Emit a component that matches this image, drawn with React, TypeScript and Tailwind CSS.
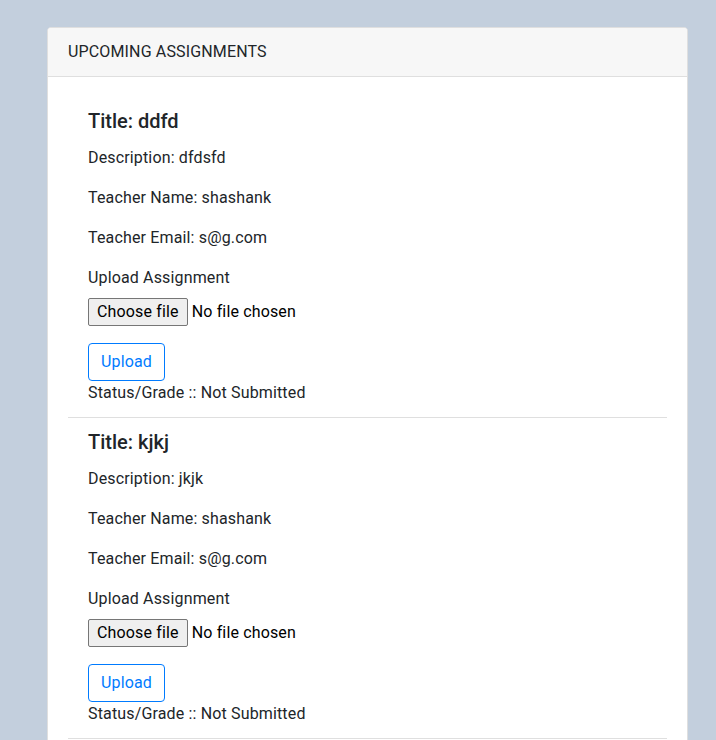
const assignments = [
  { title: "ddfd", description: "dfdsfd", teacher: "shashank", email: "s@g.com", status: "Not Submitted" },
  { title: "kjkj", description: "jkjk", teacher: "shashank", email: "s@g.com", status: "Not Submitted" },
];

function FileField() {
  return (
    <div className="flex items-center h-[28px] mb-[17px] mt-[1px]">
      <span className="h-[28px] px-[8px] flex items-center bg-[#efefef] border border-[#767676] rounded-[2px] text-black">
        Choose file
      </span>
      <span className="ml-[4px] text-black">No file chosen</span>
    </div>
  );
}

export default function App() {
  return (
    <div
      className="min-h-[740px] bg-[#c3cfdd] pt-[27px] pl-[47px] text-[16px] leading-[24px] tracking-[0.15px] text-[#212529]"
      style={{ fontFamily: "Roboto, 'Noto Sans', sans-serif" }}
    >
      <div className="w-[641px] bg-white border border-[#dfdfdf] rounded-[4px] overflow-hidden">
        <div className="bg-[#f7f7f7] border-b border-[#dfdfdf] px-[20px] py-[12px]">UPCOMING ASSIGNMENTS</div>
        <div className="px-[20px] py-[20px]">
          <ul>
            {assignments.map((a) => (
              <li key={a.title} className="px-[20px] py-[12px] border-b border-[#dfdfdf]">
                <h5 className="text-[20px] leading-[24px] font-medium tracking-normal mb-[12px]">Title: {a.title}</h5>
                <p className="mb-[16px] pt-[1px]">Description: {a.description}</p>
                <p className="mb-[16px]">Teacher Name: {a.teacher}</p>
                <p className="mb-[16px]">Teacher Email: {a.email}</p>
                <p className="mb-[8px]">Upload Assignment</p>
                <FileField />
                <button
                  type="button"
                  className="h-[38px] px-[12px] border border-[#007bff] text-[#007bff] rounded-[4px] bg-white"
                >
                  Upload
                </button>
                <div>Status/Grade :: {a.status}</div>
              </li>
            ))}
          </ul>
        </div>
      </div>
    </div>
  );
}
